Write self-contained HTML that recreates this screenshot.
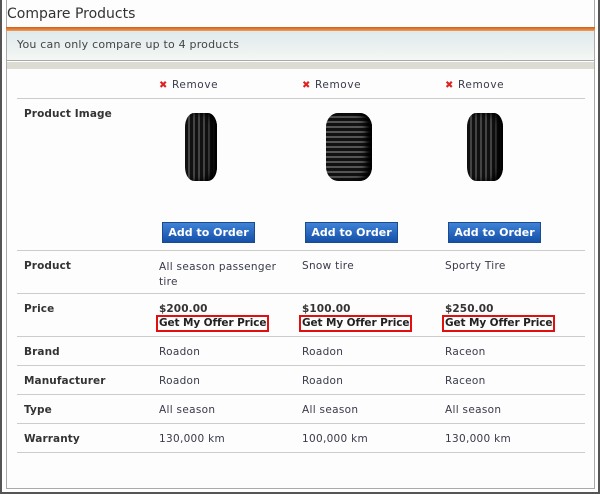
<!DOCTYPE html>
<html><head><meta charset="utf-8"><style>
*{margin:0;padding:0;box-sizing:border-box}
body{width:600px;height:494px;background:#fff;font-family:"DejaVu Sans",Verdana,sans-serif;font-size:10.5px;color:#3a3a4a;position:relative;overflow:hidden}
.outer{position:absolute;left:0;top:0;width:600px;height:494px;border:2px solid #555;border-top:none;border-left:2px solid #555}
.panel{position:absolute;left:6px;top:0;width:589px;height:489px;border:1px solid #aaa;border-top:none;background:#fcfdfc}
.title{position:absolute;left:7px;top:6px;font-size:14px;color:#333;font-family:"DejaVu Sans",sans-serif}
.orange{position:absolute;left:6px;top:27px;width:589px;height:4px;background:linear-gradient(#d55a10,#e8a060)}
.info{position:absolute;left:7px;top:31px;width:587px;height:30px;background:linear-gradient(#dfe9ec,#f4f7f4);border-bottom:1px solid #aaa;padding:7px 0 0 10px;font-size:11px;color:#444;letter-spacing:0.2px}
.gray{position:absolute;left:7px;top:62px;width:587px;height:7px;background:#dcdcd2}
.line{position:absolute;left:17px;width:568px;height:1px;background:#ccc}
.t{position:absolute;white-space:nowrap;font-size:10.5px;letter-spacing:0.3px;margin-top:1px}
.b{font-weight:bold;color:#333;letter-spacing:0.1px}
.rm{position:absolute;font-size:10.5px;letter-spacing:0.6px;margin-top:1px}
.rm i{display:inline-block;color:#d22;font-style:normal;font-weight:bold;margin-right:4px;font-size:10px}
.btn{position:absolute;top:222px;width:93px;height:21px;background:linear-gradient(#3f82d6,#1450a8);border:1px solid #1a4a90;color:#fff;font-weight:bold;font-size:11px;text-align:center;line-height:19px}
.offer{position:absolute;top:315px;height:17px;border:2px solid #e01010;font-weight:bold;color:#222;font-size:10.5px;line-height:13px;padding:0 1px;letter-spacing:-0.1px}
.tire{position:absolute;top:113px;width:32px;height:68px;border-radius:9px/14px;background:repeating-linear-gradient(90deg,#111 0 3px,#444 3px 5px);box-shadow:inset -6px 0 6px #000}
.tire2{width:46px;height:68px;border-radius:12px/14px;background:repeating-linear-gradient(0deg,#111 0 3px,#555 3px 5px)}
</style></head><body>
<div class="outer"></div>
<div class="panel"></div>
<div class="title">Compare Products</div>
<div class="orange"></div>
<div class="info">You can only compare up to 4 products</div>
<div class="gray"></div>

<div class="rm" style="left:159px;top:78px"><i>✖</i>Remove</div>
<div class="rm" style="left:302px;top:78px"><i>✖</i>Remove</div>
<div class="rm" style="left:445px;top:78px"><i>✖</i>Remove</div>
<div class="line" style="top:98px"></div>
<div class="t b" style="left:24px;top:107px">Product Image</div>
<div class="tire" style="left:185px"></div>
<div class="tire tire2" style="left:326px"></div>
<div class="tire" style="left:467px;width:36px"></div>
<div class="btn" style="left:162px">Add to Order</div>
<div class="btn" style="left:305px">Add to Order</div>
<div class="btn" style="left:448px">Add to Order</div>
<div class="line" style="top:250px"></div>
<div class="t b" style="left:24px;top:259px">Product</div>
<div class="t" style="left:159px;top:259px;line-height:15px">All season passenger<br>tire</div>
<div class="t" style="left:302px;top:259px">Snow tire</div>
<div class="t" style="left:445px;top:259px">Sporty Tire</div>
<div class="line" style="top:293px"></div>
<div class="t b" style="left:24px;top:302px">Price</div>
<div class="t b" style="left:159px;top:302px">$200.00</div>
<div class="t b" style="left:302px;top:302px">$100.00</div>
<div class="t b" style="left:445px;top:302px">$250.00</div>
<div class="offer" style="left:156px">Get My Offer Price</div>
<div class="offer" style="left:299px">Get My Offer Price</div>
<div class="offer" style="left:442px">Get My Offer Price</div>
<div class="line" style="top:336px"></div>
<div class="t b" style="left:24px;top:345px">Brand</div>
<div class="t" style="left:159px;top:345px">Roadon</div>
<div class="t" style="left:302px;top:345px">Roadon</div>
<div class="t" style="left:445px;top:345px">Raceon</div>
<div class="line" style="top:365px"></div>
<div class="t b" style="left:24px;top:374px">Manufacturer</div>
<div class="t" style="left:159px;top:374px">Roadon</div>
<div class="t" style="left:302px;top:374px">Roadon</div>
<div class="t" style="left:445px;top:374px">Raceon</div>
<div class="line" style="top:394px"></div>
<div class="t b" style="left:24px;top:403px">Type</div>
<div class="t" style="left:159px;top:403px">All season</div>
<div class="t" style="left:302px;top:403px">All season</div>
<div class="t" style="left:445px;top:403px">All season</div>
<div class="line" style="top:423px"></div>
<div class="t b" style="left:24px;top:432px">Warranty</div>
<div class="t" style="left:159px;top:432px">130,000 km</div>
<div class="t" style="left:302px;top:432px">100,000 km</div>
<div class="t" style="left:445px;top:432px">130,000 km</div>
<div class="line" style="top:452px"></div>
</body></html>
